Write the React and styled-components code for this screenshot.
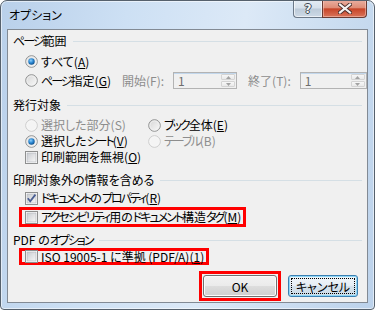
import React from 'react'
import styled, { createGlobalStyle } from 'styled-components'

const GlobalStyle = createGlobalStyle`
html, body { margin: 0; padding: 0; background: #fff; }
body {
  font-family: "Noto Sans CJK JP", "Noto Sans", sans-serif;
  font-feature-settings: "palt";
}
`

// katakana in the original UI font is narrow, squeeze those runs a bit
const KATA = /([\u30A0-\u30FF]+)/
const Jp = ({ text }) => text.split(KATA).map((s, i) => (i % 2 ? <Kata key={i}>{s}</Kata> : s))

const Text = ({ text, hotkey, disabled }) => (
    <Label $disabled={disabled}>
        <Jp text={text} />
        {hotkey && <>(<Key>{hotkey}</Key>)</>}
    </Label>
)

const RadioIcon = ({ checked, disabled }) => (
    <svg width="13" height="13" viewBox="0 0 13 13">
        <defs>
            <linearGradient id="rfill" x1="0" y1="0" x2="1" y2="1">
                <stop offset="0" stopColor="#d4d4d4" />
                <stop offset="1" stopColor="#fbfbfb" />
            </linearGradient>
            <radialGradient id="rdot" cx="0.4" cy="0.35" r="0.7">
                <stop offset="0" stopColor="#8fd0fb" />
                <stop offset="0.5" stopColor="#2c89d4" />
                <stop offset="1" stopColor="#0c4b86" />
            </radialGradient>
        </defs>
        <circle cx="6.5" cy="6.5" r="5.8" fill={disabled ? '#f4f4f4' : 'url(#rfill)'} stroke={disabled ? '#cbcbcb' : '#8e8f8f'} strokeWidth="1" />
        <circle cx="6.5" cy="6.5" r="4.6" fill="none" stroke={disabled ? '#f7f7f7' : '#f3f3f3'} strokeWidth="0.8" />
        {checked && <circle cx="6.5" cy="6.5" r="3.2" fill="url(#rdot)" />}
    </svg>
)

const CheckIcon = ({ checked }) => (
    <svg width="13" height="13" viewBox="0 0 13 13">
        <defs>
            <linearGradient id="cfill" x1="0" y1="0" x2="1" y2="1">
                <stop offset="0" stopColor="#c9ccd1" />
                <stop offset="1" stopColor="#f7f7f7" />
            </linearGradient>
        </defs>
        <rect x="0.5" y="0.5" width="12" height="12" fill="#fff" stroke="#8e8f8f" />
        <rect x="2" y="2" width="9" height="9" fill="url(#cfill)" stroke="#aeb2b8" strokeWidth="0.6" />
        {checked && <path d="M2.8 6.2 L5.2 9.2 L10.4 2.6" fill="none" stroke="#4b5f93" strokeWidth="1.8" />}
    </svg>
)

const ArrowIcon = ({ up }) => (
    <svg width="5" height="3" viewBox="0 0 5 3">
        <path d={up ? 'M0 3 L2.5 0 L5 3 Z' : 'M0 0 L2.5 3 L5 0 Z'} fill="#a2a2a2" />
    </svg>
)

const SpinBox = ({ w }) => (
    <Spin $w={w}>
        <SpinText>1</SpinText>
        <SpinButtons>
            <SpinBtn><ArrowIcon up /></SpinBtn>
            <SpinBtn><ArrowIcon /></SpinBtn>
        </SpinButtons>
    </Spin>
)

const App = () => {
    return (
        <>
            <GlobalStyle />
            <Window>
                <TitleBar>
                    <Title>オプション</Title>
                    <Caption>
                        <HelpButton>?</HelpButton>
                        <CloseButton>
                            <svg width="14" height="11" viewBox="0 0 14 11">
                                <path d="M2 1.5 L12 9.5 M12 1.5 L2 9.5" stroke="#4a2d2a" strokeWidth="4" strokeLinecap="square" />
                                <path d="M2 1.5 L12 9.5 M12 1.5 L2 9.5" stroke="#f4f1f1" strokeWidth="2.2" strokeLinecap="square" />
                            </svg>
                        </CloseButton>
                    </Caption>
                </TitleBar>
                <Client>
                    <GroupTitle $mt={3}><Jp text="ページ範囲" /><Rule /></GroupTitle>
                    <Row $mt={3} $h={19}>
                        <Option><RadioIcon checked /><Text text="すべて" hotkey="A" /></Option>
                    </Row>
                    <Row $h={19}>
                        <Option $w={97}><RadioIcon /><Text text="ページ指定" hotkey="G" /></Option>
                        <FieldLabel>開始(F):</FieldLabel>
                        <SpinBox w={64} />
                        <FieldLabel $ml={11}>終了(T):</FieldLabel>
                        <SpinBox w={67} />
                    </Row>

                    <GroupTitle $mt={7}><Jp text="発行対象" /><Rule /></GroupTitle>
                    <Row $mt={4} $h={16}>
                        <Option $w={123}><RadioIcon disabled /><Text text="選択した部分(S)" disabled /></Option>
                        <Option><RadioIcon /><Text text="ブック全体" hotkey="E" /></Option>
                    </Row>
                    <Row $h={16}>
                        <Option $w={123}><RadioIcon checked /><Text text="選択したシート" hotkey="V" /></Option>
                        <Option><RadioIcon disabled /><Text text="テーブル(B)" disabled /></Option>
                    </Row>
                    <Row $h={16}>
                        <Option><CheckIcon /><Text text="印刷範囲を無視" hotkey="O" /></Option>
                    </Row>

                    <GroupTitle $mt={7}><Jp text="印刷対象外の情報を含める" /><Rule /></GroupTitle>
                    <Row $mt={2} $h={16}>
                        <Option><CheckIcon checked /><Text text="ドキュメントのプロパティ" hotkey="R" /></Option>
                    </Row>
                    <Row $mt={1} $h={20} $pl={11}>
                        <Highlight>
                            <Option><CheckIcon /><Text text="アクセシビリティ用のドキュメント構造タグ" hotkey="M" /></Option>
                        </Highlight>
                    </Row>

                    <GroupTitle $mt={5}><Jp text="PDF のオプション" /><Rule /></GroupTitle>
                    <Row $h={17} $pl={11}>
                        <Highlight>
                            <Option><CheckIcon /><Text text="ISO 19005-1 に準拠 (PDF/A)" hotkey="1" /></Option>
                        </Highlight>
                    </Row>

                    <Footer>
                        <ButtonMark>
                            <Button>OK</Button>
                        </ButtonMark>
                        <Button $focused>
                            <FocusRect>キャンセル</FocusRect>
                        </Button>
                    </Footer>
                </Client>
            </Window>
        </>
    )
}

const Window = styled.div`
width: 375px;
height: 310px;
box-sizing: border-box;
border: 1px solid #56616d;
border-radius: 7px 7px 4px 4px;
background: linear-gradient(100deg, #b9d0ea 0%, #cde0f4 30%, #dce9f7 58%, #c9dcf0 82%, #bcd2eb 100%);
box-shadow: inset 0 0 0 1px rgba(255,255,255,0.55);
display: flex;
flex-direction: column;
overflow: hidden;
`
const TitleBar = styled.div`
height: 28px;
display: flex;
align-items: flex-start;
padding: 0 7px 0 8px;
`
const Title = styled.div`
font-size: 12px;
line-height: 14px;
margin-top: 7px;
color: #000;
`
const Caption = styled.div`
margin-left: auto;
margin-top: -1px;
display: flex;
`
const HelpButton = styled.div`
width: 29px;
height: 18px;
box-sizing: border-box;
border: 1px solid #6b7888;
border-top: none;
border-right: none;
border-radius: 0 0 0 4px;
background: linear-gradient(#e4ecf5 0%, #d6e0eb 48%, #bccad9 52%, #cdd9e6 100%);
box-shadow: inset 0 0 0 1px rgba(255,255,255,0.6);
display: flex;
align-items: center;
justify-content: center;
font-family: "DejaVu Sans", sans-serif;
font-weight: bold;
font-size: 12px;
color: #f4f4f4;
text-shadow: 1px 0 #3c4652, -1px 0 #3c4652, 0 1px #3c4652, 0 -1px #3c4652;
`
const CloseButton = styled.div`
width: 45px;
height: 18px;
box-sizing: border-box;
border: 1px solid #6b3b33;
border-top: none;
border-radius: 0 0 4px 0;
background: linear-gradient(#eab0a2 0%, #de8c76 46%, #c74428 52%, #d9745a 100%);
box-shadow: inset 0 0 0 1px rgba(255,220,210,0.45);
display: flex;
align-items: center;
justify-content: center;
`
const Client = styled.div`
flex: 1;
margin: 0 6px 6px 6px;
border: 1px solid #828a94;
background: #f0f0f0;
display: flex;
flex-direction: column;
font-size: 12px;
color: #000;
`
const GroupTitle = styled.div`
display: flex;
align-items: center;
height: 16px;
margin-top: ${p => p.$mt || 0}px;
padding: 0 5px;
line-height: 16px;
white-space: pre;
`
const Rule = styled.div`
flex: 1;
height: 1px;
margin-left: 6px;
background: #d5dfe5;
`
const Row = styled.div`
display: flex;
align-items: center;
height: ${p => p.$h}px;
margin-top: ${p => p.$mt || 0}px;
padding-left: ${p => p.$pl || 17}px;
`
const Option = styled.div`
display: flex;
align-items: center;
gap: 3px;
width: ${p => (p.$w ? p.$w + 'px' : 'auto')};
flex-shrink: 0;
svg { flex-shrink: 0; }
`
const Label = styled.span`
line-height: 16px;
white-space: pre;
color: ${p => (p.$disabled ? '#8d8d8d' : '#000')};
`
const Kata = styled.span`
letter-spacing: -2px;
`
const Key = styled.span`
text-decoration: underline;
`
const FieldLabel = styled.span`
color: #8d8d8d;
margin-left: ${p => p.$ml || 0}px;
margin-right: 9px;
white-space: nowrap;
line-height: 16px;
`
const Spin = styled.div`
width: ${p => p.$w}px;
height: 17px;
box-sizing: border-box;
border: 1px solid #b3b3b3;
background: #f0f0f0;
box-shadow: inset 0 1px 0 #c2d7ec;
display: flex;
`
const SpinText = styled.span`
flex: 1;
padding-left: 4px;
line-height: 15px;
color: #6d6d6d;
`
const SpinButtons = styled.div`
width: 16px;
display: flex;
flex-direction: column;
gap: 1px;
padding: 1px;
box-sizing: border-box;
`
const SpinBtn = styled.div`
flex: 1;
border: 1px solid #d4d4d4;
border-radius: 1px;
background: linear-gradient(#f7f7f7, #e9e9e9);
display: flex;
align-items: center;
justify-content: center;
`
const Highlight = styled.div`
display: flex;
align-items: center;
height: 100%;
box-sizing: border-box;
border: 3px solid #ff0000;
padding: 0 2px 0 3px;
`
const Footer = styled.div`
margin-top: auto;
display: flex;
align-items: center;
justify-content: flex-end;
padding: 0 9px 1px 0;
gap: 7px;
`
const ButtonMark = styled.div`
border: 3px solid #ff0000;
padding: 1px;
display: flex;
`
const Button = styled.div`
width: ${p => (p.$focused ? 70 : 74)}px;
height: 22px;
box-sizing: border-box;
border: 1px solid ${p => (p.$focused ? '#3c7fb1' : '#707070')};
border-radius: 3px;
background: ${p => (p.$focused
        ? 'linear-gradient(#f1f6fa 0%, #e6eef5 48%, #d5e2ec 52%, #ccdbe7 100%)'
        : 'linear-gradient(#f2f2f2 0%, #ebebeb 48%, #dddddd 52%, #cfcfcf 100%)')};
box-shadow: ${p => (p.$focused ? 'inset 0 0 0 1px #8ed6f6' : 'inset 0 0 0 1px #fbfbfb')};
display: flex;
align-items: center;
justify-content: center;
font-size: 12px;
color: #000;
padding: 2px;
`
const FocusRect = styled.div`
flex: 1;
align-self: stretch;
display: flex;
align-items: center;
justify-content: center;
border: 1px dotted #000;
`

export default App
